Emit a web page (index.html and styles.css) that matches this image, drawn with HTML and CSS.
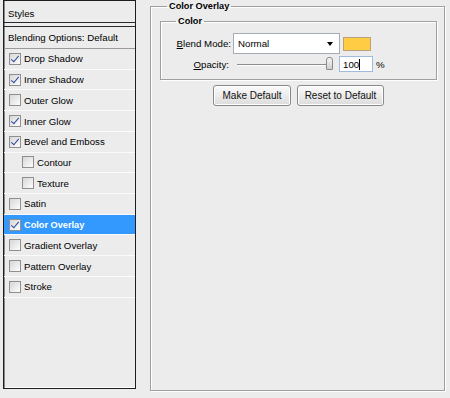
FILE: index.html
```html
<!DOCTYPE html>
<html lang="en">
<head>
  <meta charset="UTF-8" />
  <title>Layer Style - Color Overlay</title>
  <link rel="stylesheet" href="styles.css">
</head>
<body>
  <div class="window">
    <!-- styles list -->
    <div class="styles-panel">
      <div class="panel-head">Styles</div>
      <div class="blend-row">Blending Options: Default</div>
      <div class="fx-row"><span class="cb on"></span>Drop Shadow</div>
      <div class="fx-row"><span class="cb on"></span>Inner Shadow</div>
      <div class="fx-row"><span class="cb"></span>Outer Glow</div>
      <div class="fx-row"><span class="cb on"></span>Inner Glow</div>
      <div class="fx-row"><span class="cb on"></span>Bevel and Emboss</div>
      <div class="fx-row sub"><span class="cb"></span>Contour</div>
      <div class="fx-row sub"><span class="cb"></span>Texture</div>
      <div class="fx-row"><span class="cb"></span>Satin</div>
      <div class="fx-row selected"><span class="cb on"></span>Color Overlay</div>
      <div class="fx-row"><span class="cb"></span>Gradient Overlay</div>
      <div class="fx-row"><span class="cb"></span>Pattern Overlay</div>
      <div class="fx-row"><span class="cb"></span>Stroke</div>
    </div>

    <!-- settings -->
    <fieldset class="group outer">
      <legend>Color Overlay</legend>
      <fieldset class="group inner">
        <legend>Color</legend>
        <div class="field-row">
          <label class="field-label"><u>B</u>lend Mode:</label>
          <div class="select">Normal<span class="arrow"></span></div>
          <span class="swatch"></span>
        </div>
        <div class="field-row second">
          <label class="field-label short"><u>O</u>pacity:</label>
          <div class="slider"><span class="thumb"></span></div>
          <div class="num-input">100<span class="caret"></span></div>
          <span class="unit">%</span>
        </div>
      </fieldset>
      <div class="btn-row">
        <button class="btn make">Make Default</button>
        <button class="btn reset">Reset to Default</button>
      </div>
    </fieldset>
  </div>
</body>
</html>
```

FILE: styles.css
```css
* {
  box-sizing: border-box;
}

body {
  margin: 0;
  background-color: #ececec;
  font-family: "Liberation Sans", Arial, sans-serif;
  font-size: 9.7px;
  color: #000;
}

.window {
  display: flex;
  align-items: flex-start;
  padding-left: 3px;
  height: 398px;
}

/* left list */
.styles-panel {
  width: 133px;
  height: 389px;
  border: 1px solid #1e1e1e;
  background-color: #ececec;
  box-shadow: inset 1px 0 0 #8a8a8a, inset 0 -1px 0 #fff;
}

.panel-head {
  height: 22px;
  padding: 6px 0 0 4px;
  line-height: 14px;
  border-bottom: 1px solid #2a2a2a;
}

.blend-row {
  height: 23px;
  margin-top: 3px;
  padding-left: 4px;
  line-height: 22px;
  border-top: 1px solid #2a2a2a;
  border-bottom: 1px solid #9a9a9a;
}

.fx-row {
  display: flex;
  align-items: center;
  height: 20.73px;
  padding-left: 5px;
  border-bottom: 1px solid #fafafa;
}

.fx-row.sub {
  padding-left: 18px;
}

.fx-row.selected {
  background-color: #3399ff;
  color: #fff;
  font-weight: bold;
  font-size: 9.2px;
}

.cb {
  width: 12px;
  height: 12px;
  margin-right: 3px;
  border: 1px solid #8f8f8f;
  background: linear-gradient(135deg, #d6d6d6, #fdfdfd);
  position: relative;
}

.cb.on::after {
  content: "";
  position: absolute;
  left: 3px;
  top: 0px;
  width: 3px;
  height: 7px;
  border: solid #2a4598;
  border-width: 0 1.5px 1.5px 0;
  transform: rotate(40deg);
}

/* right side */
.group {
  margin: 0;
  border: 1px solid #a0a0a0;
  box-shadow: inset 1px 1px 0 #fff, 1px 1px 0 #fff;
  min-inline-size: 0;
}

.group legend {
  padding: 0 2px;
  font-weight: bold;
  font-size: 9.2px;
  line-height: 12px;
}

.outer {
  margin-left: 14px;
  width: 295px;
  height: 391px;
  padding: 0 7px 0 9px;
}

.outer legend {
  margin-left: 7px;
}

.inner {
  width: 277px;
  margin-top: 3px;
  padding: 6px 0 7px 0;
}

.inner legend {
  margin-left: 15px;
}

.field-row {
  display: flex;
  align-items: center;
  height: 21px;
}

.field-row.second {
  height: 16px;
  margin-top: 2px;
}

.field-label {
  width: 70px;
  text-align: right;
}

.field-label.short {
  width: 68px;
}

.select {
  display: flex;
  align-items: center;
  width: 107px;
  height: 21px;
  margin-left: 2px;
  padding-left: 4px;
  background-color: #fff;
  border: 1px solid #a5acb5;
}

.arrow {
  margin-left: auto;
  margin-right: 6px;
  border-left: 3.5px solid transparent;
  border-right: 3.5px solid transparent;
  border-top: 4px solid #000;
}

.swatch {
  width: 28px;
  height: 14px;
  margin-left: 3px;
  background-color: #ffcc44;
  border: 1px solid #b9a27a;
}

.slider {
  position: relative;
  width: 96px;
  height: 16px;
  margin-left: 8px;
}

.slider::before {
  content: "";
  position: absolute;
  left: 0;
  right: 7px;
  top: 8px;
  height: 1px;
  background-color: #8c8c8c;
  box-shadow: 0 1px 0 #fff;
}

.thumb {
  position: absolute;
  left: 89px;
  top: 1px;
  width: 7px;
  height: 13px;
  border: 1px solid #8a8a8a;
  border-radius: 3px 3px 1px 1px;
  background: linear-gradient(#f6f6f6, #cfcfcf);
}

.num-input {
  display: flex;
  align-items: center;
  width: 34px;
  height: 16px;
  margin-left: 6px;
  padding-left: 3px;
  background-color: #fff;
  border: 1px solid #9fbbe0;
}

.caret {
  width: 1px;
  height: 11px;
  background-color: #000;
}

.unit {
  margin-left: 3px;
}

.btn-row {
  display: flex;
  justify-content: center;
  gap: 6px;
  margin-top: 5px;
}

.btn {
  height: 21px;
  padding: 0;
  font-family: "Liberation Sans", Arial, sans-serif;
  font-size: 10px;
  color: #111;
  border: 1px solid #8a8a8a;
  border-radius: 3px;
  background: linear-gradient(#fbfbfb, #dcdcdc);
  box-shadow: inset 0 0 0 1px #fff;
}

.btn.make {
  width: 78px;
}

.btn.reset {
  width: 87px;
}
```
